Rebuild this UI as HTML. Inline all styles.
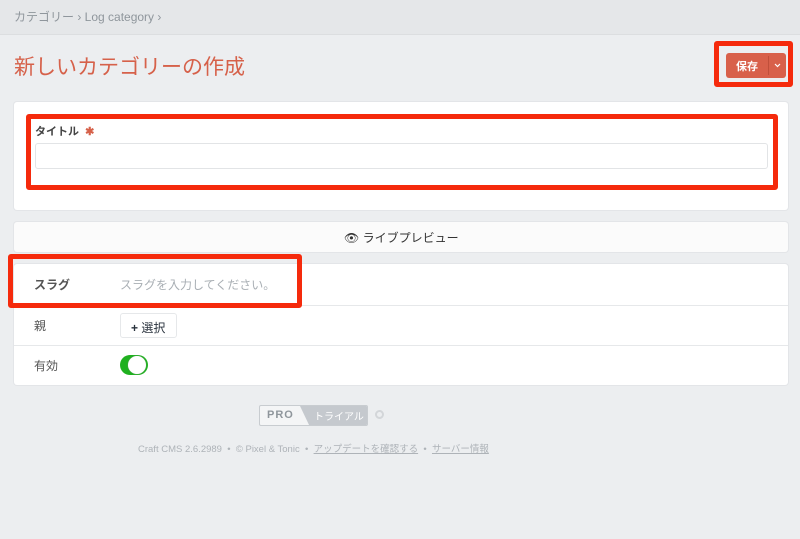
<!DOCTYPE html>
<html><head><meta charset="utf-8"><style>
*{box-sizing:border-box;margin:0;padding:0}
body{width:800px;height:539px;background:#eceef0;font-family:"Liberation Sans","Noto Sans CJK JP",sans-serif;position:relative;overflow:hidden;color:#29323d}
.abs{position:absolute}
.hdr{left:0;top:0;width:800px;height:35px;background:#e5e7e9;border-bottom:1px solid #dcdee0}
.card{background:#fff;border-radius:3px;box-shadow:0 0 0 1px #e3e5e8}
.red{border:5px solid #f52a0c;border-radius:3px}
.row{position:absolute;left:0;width:774px;height:40px;border-top:1px solid #e6e8ea}
.lbl{position:absolute;left:20px;top:11px;font-size:12px;color:#555}
</style></head><body>
<div class="abs hdr"></div>
<div class="abs" style="left:14px;top:8px;font-size:12px;color:#8f969c">カテゴリー › Log category ›</div>
<div class="abs" style="left:14px;top:51px;font-size:21px;color:#d6614a">新しいカテゴリーの作成</div>
<div class="abs red" style="left:714px;top:41px;width:79px;height:46px"></div>
<div class="abs" style="left:726px;top:53px;width:60px;height:25px;background:#d8604a;border-radius:3px;color:#fff;font-size:11px;font-weight:bold">
<span class="abs" style="left:10px;top:5px">保存</span>
<span class="abs" style="left:42px;top:3px;width:1px;height:19px;background:#c04f3a"></span>
<svg class="abs" style="left:48px;top:10px" width="7" height="5" viewBox="0 0 7 5"><path d="M1 1l2.5 2.5L6 1" stroke="#fff" stroke-width="1.2" fill="none"/></svg></div>
<div class="abs card" style="left:14px;top:102px;width:774px;height:108px"></div>
<div class="abs red" style="left:26px;top:114px;width:752px;height:76px"></div>
<div class="abs" style="left:35px;top:123px;font-size:11px;font-weight:bold;color:#444">タイトル <span style="color:#d6614a;margin-left:3px">✱</span></div>
<div class="abs" style="left:35px;top:143px;width:733px;height:26px;border:1px solid #e2e4e6;border-radius:3px;background:#fff"></div>
<div class="abs card" style="left:14px;top:222px;width:774px;height:30px;background:#fbfbfb"></div>
<div class="abs" style="left:344px;top:229px;font-size:12px;color:#333">👁 ライブプレビュー</div>
<div class="abs card" style="left:14px;top:264px;width:774px;height:121px">
<div class="row" style="top:0;border-top:none"><span class="lbl" style="font-weight:bold;top:12px">スラグ</span><span class="abs" style="left:106px;top:12px;font-size:12px;color:#a9afb4">スラグを入力してください。</span></div>
<div class="row" style="top:41px"><span class="lbl">親</span><div class="abs" style="left:106px;top:7px;width:57px;height:25px;border:1px solid #e6e8ea;border-radius:3px;font-size:12px;padding:5px 0 0 10px"><b>+</b> 選択</div></div>
<div class="row" style="top:81px"><span class="lbl">有効</span><div class="abs" style="left:106px;top:9px;width:28px;height:20px;border-radius:10px;background:#1fb01f"></div><div class="abs" style="left:114px;top:10px;width:18px;height:18px;border-radius:9px;background:#fff;box-shadow:0 0 1px #999"></div></div>
</div>
<div class="abs red" style="left:8px;top:254px;width:294px;height:54px"></div>
<div class="abs" style="left:259px;top:405px;width:109px;height:21px;border:1px solid #c8ccd0;border-radius:2px;background:#f4f5f6;overflow:hidden">
<span class="abs" style="left:7px;top:3px;font-size:11px;font-weight:bold;color:#8f969c;letter-spacing:1px">PRO</span>
<div class="abs" style="left:40px;top:0;width:70px;height:21px;background:#c5c9ce;clip-path:polygon(0 0,100% 0,100% 100%,10px 100%)"></div>
<span class="abs" style="left:54px;top:2px;font-size:10px;color:#fff;white-space:nowrap">トライアル</span></div>
<div class="abs" style="left:375px;top:410px;width:9px;height:9px;border-radius:5px;border:2px solid #d3d6d9"></div>
<div class="abs" style="left:138px;top:441px;font-size:9.5px;color:#aeb3b8;white-space:nowrap">Craft CMS 2.6.2989 &nbsp;•&nbsp; © Pixel &amp; Tonic &nbsp;•&nbsp; <u>アップデートを確認する</u> &nbsp;•&nbsp; <u>サーバー情報</u></div>
</body></html>
